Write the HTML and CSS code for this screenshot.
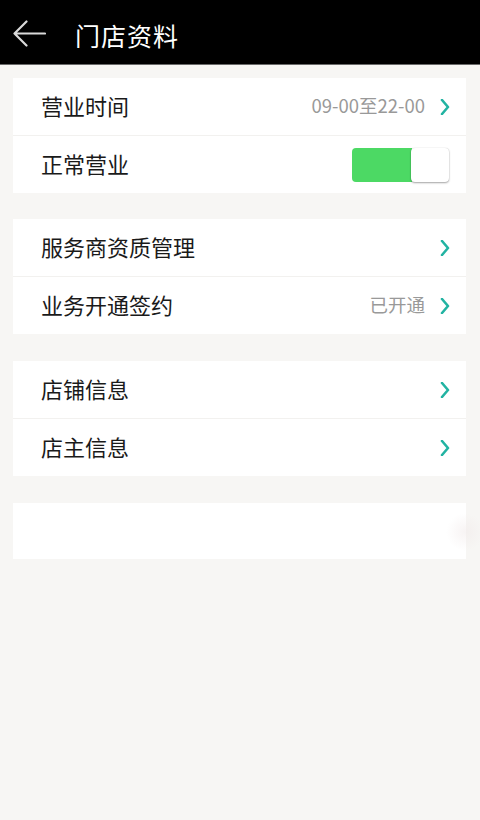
FILE: index.html
```html
<!DOCTYPE html>
<html lang="zh-CN">
<head>
<meta charset="utf-8">
<title>门店资料</title>
<link rel="stylesheet" href="styles.css">
</head>
<body>
<header class="topbar">
  <svg class="back" width="34" height="28" viewBox="0 0 34 28" aria-hidden="true">
    <path d="M33 13.5H2.5M14.5 1.5L2.5 13.5L14.5 25.5" fill="none" stroke="#d9d9d9" stroke-width="2.2" stroke-linecap="round" stroke-linejoin="round"/>
  </svg>
  <h1 class="title">门店资料</h1>
</header>
<main class="content">
  <section class="card first">
    <div class="row">
      <span class="label">营业时间</span>
      <span class="value">09-00至22-00</span>
      <svg class="chev" width="10" height="16" viewBox="0 0 10 16" aria-hidden="true"><path d="M2 1L8 8L2 15" fill="none" stroke="#22b3a2" stroke-width="2.6" stroke-linecap="round" stroke-linejoin="round"/></svg>
    </div>
    <div class="row">
      <span class="label">正常营业</span>
      <span class="switch"><span class="switch-on"></span><span class="knob"></span></span>
    </div>
  </section>
  <section class="card">
    <div class="row">
      <span class="label">服务商资质管理</span>
      <svg class="chev" width="10" height="16" viewBox="0 0 10 16" aria-hidden="true"><path d="M2 1L8 8L2 15" fill="none" stroke="#22b3a2" stroke-width="2.6" stroke-linecap="round" stroke-linejoin="round"/></svg>
    </div>
    <div class="row">
      <span class="label">业务开通签约</span>
      <span class="value">已开通</span>
      <svg class="chev" width="10" height="16" viewBox="0 0 10 16" aria-hidden="true"><path d="M2 1L8 8L2 15" fill="none" stroke="#22b3a2" stroke-width="2.6" stroke-linecap="round" stroke-linejoin="round"/></svg>
    </div>
  </section>
  <section class="card">
    <div class="row">
      <span class="label">店铺信息</span>
      <svg class="chev" width="10" height="16" viewBox="0 0 10 16" aria-hidden="true"><path d="M2 1L8 8L2 15" fill="none" stroke="#22b3a2" stroke-width="2.6" stroke-linecap="round" stroke-linejoin="round"/></svg>
    </div>
    <div class="row">
      <span class="label">店主信息</span>
      <svg class="chev" width="10" height="16" viewBox="0 0 10 16" aria-hidden="true"><path d="M2 1L8 8L2 15" fill="none" stroke="#22b3a2" stroke-width="2.6" stroke-linecap="round" stroke-linejoin="round"/></svg>
    </div>
  </section>
  <section class="card">
    <div class="row empty"></div>
  </section>
</main>
<div class="float-ball"></div>
</body>
</html>
```
FILE: styles.css
```css
* { box-sizing: border-box; }
html, body { margin: 0; padding: 0; }
body {
  width: 480px;
  min-height: 820px;
  background: #f7f6f4;
  font-family: "Noto Sans CJK SC", "Noto Sans", "Liberation Sans", sans-serif;
  color: #1a1a1a;
  position: relative;
  overflow: hidden;
}
.topbar {
  height: 65px;
  background: #000;
  border-bottom: 1px solid #6a6a6a;
  display: flex;
  align-items: center;
  padding-left: 12px;
  padding-top: 6px;
}
.back { display: block; flex: none; margin-top: -3px; }
.title {
  margin: 0 0 0 29px;
  font-size: 25px;
  font-weight: normal;
  color: #fff;
  letter-spacing: 1px;
  line-height: 1;
}
.content {
  padding: 13px 14px 0 13px;
  display: flex;
  flex-direction: column;
  gap: 27px;
}
.card {
  background: #fff;
  display: flex;
  flex-direction: column;
}
.card.first { margin-bottom: -1px; }
.row {
  height: 57px;
  display: flex;
  align-items: center;
  padding: 0 16px 0 28px;
}
.row + .row { border-top: 1px solid #f2f1ef; height: 58px; }
.empty { height: 56px; }
.label {
  font-size: 22px;
  line-height: 1;
  flex: 1;
  padding-bottom: 3px;
}
.value {
  font-size: 18.5px;
  color: #999;
  line-height: 1;
  margin-right: 15px;
  padding-bottom: 3px;
}
.chev { display: block; flex: none; }
.switch {
  display: flex;
  width: 97px;
  height: 34px;
  margin-right: 1px;
  border-radius: 4px;
  position: relative;
}
.switch-on {
  flex: 1;
  background: #4cd964;
  border-radius: 4px 0 0 4px;
}
.knob {
  width: 38px;
  background: #fff;
  border-radius: 4px;
  box-shadow: 0 1px 2px rgba(0,0,0,0.35), 0 0 1px rgba(0,0,0,0.2);
  margin-left: -1px;
}
.float-ball {
  position: absolute;
  left: 446px;
  top: 513px;
  width: 38px;
  height: 38px;
  border-radius: 50%;
  background: radial-gradient(circle, rgba(240,232,232,0.5), rgba(247,246,244,0) 70%);
}
```
